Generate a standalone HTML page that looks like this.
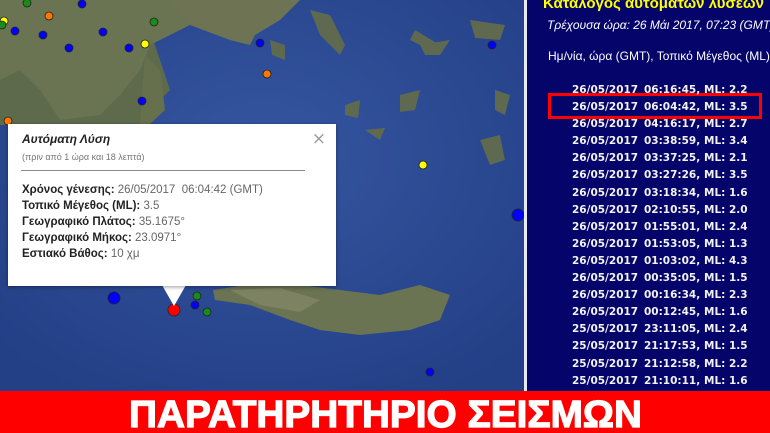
<!DOCTYPE html>
<html><head><meta charset="utf-8"><style>
*{margin:0;padding:0}
body{width:770px;height:433px;overflow:hidden;position:relative;background:#050563;font-family:"Liberation Sans","DejaVu Sans",sans-serif}
#map{position:absolute;left:0;top:0;width:524px;height:391px}
#panel{position:absolute;left:527px;top:0;width:243px;height:391px;background:#04046a}
#sep{position:absolute;left:524px;top:0;width:3px;height:391px;background:#e8e8f0}
.pop{position:absolute;left:8px;top:124px;width:328px;height:162px;background:#fff;box-shadow:0 1px 4px rgba(0,0,0,.4);color:#222}
.col{position:absolute;top:82px;font:bold 10.5px/17.1px "DejaVu Sans",sans-serif;color:#f2f2f2;white-space:nowrap}
</style></head><body>
<svg id="map" width="524" height="391" viewBox="0 0 524 391">
<defs><radialGradient id="sea" cx="50%" cy="40%" r="70%"><stop offset="0" stop-color="#3556a0"/><stop offset="1" stop-color="#233f86"/></radialGradient></defs>
<rect width="524" height="391" fill="url(#sea)"/>
<path d="M0 0 L230 0 L210 20 L150 30 L160 60 L170 90 L150 110 L140 125 L0 125 Z" fill="#5d6a4c"/>
<path d="M0 0 L200 0 L190 25 L150 45 L140 70 L120 95 L100 115 L60 120 L40 90 L20 70 L0 80 Z" fill="#6b7452"/>
<path d="M170 0 L300 0 L280 20 L255 35 L250 45 L230 40 L190 25 Z" fill="#6e7354"/>
<path d="M145 55 L160 70 L165 110 L150 124 L140 124 Z" fill="#66704d"/>
<path d="M213 290 L260 283 L300 285 L340 290 L380 295 L420 285 L450 295 L440 320 L410 330 L360 335 L320 330 L290 320 L250 305 L215 300 Z" fill="#6a7352"/>
<path d="M230 290 L280 288 L320 300 L300 312 L260 305 Z" fill="#7d8262"/>
<path d="M310 10 L330 15 L345 45 L340 55 L320 35 Z M270 40 L285 45 L285 60 L272 55Z M400 95 L420 90 L415 110 L400 112Z M345 105 L360 100 L358 118 L345 115Z M415 30 L440 45 L430 50 L410 40Z M470 20 L505 25 L500 40 L475 38Z M420 45 L450 40 L440 55 L425 55Z M480 140 L500 135 L505 160 L490 165Z M365 130 L385 128 L380 140Z M495 90 L510 95 L505 115 L495 110Z" fill="#5e6950"/>
<g stroke="#222" stroke-width="0.8">
<circle cx="4" cy="21" r="4" fill="#ff0"/><circle cx="2" cy="25" r="4" fill="#1a8a1a"/>
<circle cx="27" cy="3" r="4" fill="#1a8a1a"/><circle cx="82" cy="4" r="4" fill="#00f"/>
<circle cx="49" cy="16" r="4" fill="#f70"/><circle cx="15" cy="31" r="4" fill="#00f"/>
<circle cx="43" cy="35" r="4" fill="#00f"/><circle cx="69" cy="48" r="4" fill="#00f"/>
<circle cx="103" cy="32" r="4" fill="#00f"/><circle cx="154" cy="22" r="4" fill="#1a8a1a"/>
<circle cx="145" cy="44" r="4" fill="#ff0"/><circle cx="129" cy="48" r="4" fill="#00f"/>
<circle cx="260" cy="43" r="4" fill="#00f"/><circle cx="267" cy="74" r="4" fill="#f70"/>
<circle cx="142" cy="101" r="4" fill="#00f"/><circle cx="8" cy="121" r="4" fill="#f70"/>
<circle cx="492" cy="45" r="4" fill="#00f"/><circle cx="423" cy="165" r="4" fill="#ff0"/>
<circle cx="518" cy="215" r="6" fill="#00f"/>
<circle cx="114" cy="298" r="6" fill="#00f"/><circle cx="197" cy="296" r="4" fill="#1a8a1a"/>
<circle cx="195" cy="305" r="4" fill="#00f"/><circle cx="207" cy="312" r="4" fill="#1a8a1a"/>
<circle cx="430" cy="372" r="4" fill="#00f"/><circle cx="174" cy="310" r="6" fill="#f00"/>
</g>
<path d="M162 285 L186 285 L174 306 Z" fill="#fff"/>
</svg>
<div class="pop">
<div style="position:absolute;left:14px;top:8px;font:italic bold 12px 'Liberation Sans',sans-serif">Αυτόματη Λύση</div>
<div style="position:absolute;left:14px;top:28px;font:9px 'Liberation Sans',sans-serif;color:#777">(πριν από 1 ώρα και 18 λεπτά)</div>
<div style="position:absolute;left:13px;top:46px;width:284px;height:1px;background:#888"></div>
<div style="position:absolute;right:10px;top:5px;font:17px 'DejaVu Sans',sans-serif;color:#999">×</div>
<div style="position:absolute;left:14px;top:58px;font:11.5px/16px 'Liberation Sans',sans-serif;color:#666">
<b style="color:#222">Χρόνος γένεσης:</b> 26/05/2017&nbsp; 06:04:42 (GMT)<br>
<b style="color:#222">Τοπικό Μέγεθος (ML):</b> 3.5<br>
<b style="color:#222">Γεωγραφικό Πλάτος:</b> 35.1675°<br>
<b style="color:#222">Γεωγραφικό Μήκος:</b> 23.0971°<br>
<b style="color:#222">Εστιακό Βάθος:</b> 10 χμ</div>
</div>
<div id="sep"></div>
<div id="panel"></div>
<div style="position:absolute;left:543px;top:-5px;font:bold 15px 'Liberation Sans',sans-serif;color:#ffff00;white-space:nowrap">Κατάλογος αυτόματων λύσεων</div>
<div style="position:absolute;left:547px;top:18px;font:italic 12px 'Liberation Sans',sans-serif;color:#fff;white-space:nowrap">Τρέχουσα ώρα: 26 Μάι 2017, 07:23 (GMT)</div>
<div style="position:absolute;left:548px;top:49px;font:12px 'Liberation Sans',sans-serif;color:#fff;white-space:nowrap">Ημ/νία, ώρα (GMT), Τοπικό Μέγεθος (ML)</div>
<div style="position:absolute;left:548px;top:93px;width:208px;height:20px;border:3px solid #f00"></div>
<div class="col" style="left:572px">26/05/2017<br>26/05/2017<br>26/05/2017<br>26/05/2017<br>26/05/2017<br>26/05/2017<br>26/05/2017<br>26/05/2017<br>26/05/2017<br>26/05/2017<br>26/05/2017<br>26/05/2017<br>26/05/2017<br>26/05/2017<br>25/05/2017<br>25/05/2017<br>25/05/2017<br>25/05/2017</div>
<div class="col" style="left:644px">06:16:45,<br>06:04:42,<br>04:16:17,<br>03:38:59,<br>03:37:25,<br>03:27:26,<br>03:18:34,<br>02:10:55,<br>01:55:01,<br>01:53:05,<br>01:03:02,<br>00:35:05,<br>00:16:34,<br>00:12:45,<br>23:11:05,<br>21:17:53,<br>21:12:58,<br>21:10:11,</div>
<div class="col" style="left:704px">ML: 2.2<br>ML: 3.5<br>ML: 2.7<br>ML: 3.4<br>ML: 2.1<br>ML: 3.5<br>ML: 1.6<br>ML: 2.0<br>ML: 2.4<br>ML: 1.3<br>ML: 4.3<br>ML: 1.5<br>ML: 2.3<br>ML: 1.6<br>ML: 2.4<br>ML: 1.5<br>ML: 2.2<br>ML: 1.6</div>
<div style="position:absolute;left:0;top:391px;width:770px;height:42px;background:#f00"></div>
<svg style="position:absolute;left:0;top:391px" width="770" height="42"><text x="129" y="36" textLength="513" lengthAdjust="spacingAndGlyphs" font-family="Liberation Sans,sans-serif" font-weight="bold" font-size="38" fill="#fff" stroke="#fff" stroke-width="1.2">ΠΑΡΑΤΗΡΗΤΗΡΙΟ ΣΕΙΣΜΩΝ</text></svg>
</body></html>
